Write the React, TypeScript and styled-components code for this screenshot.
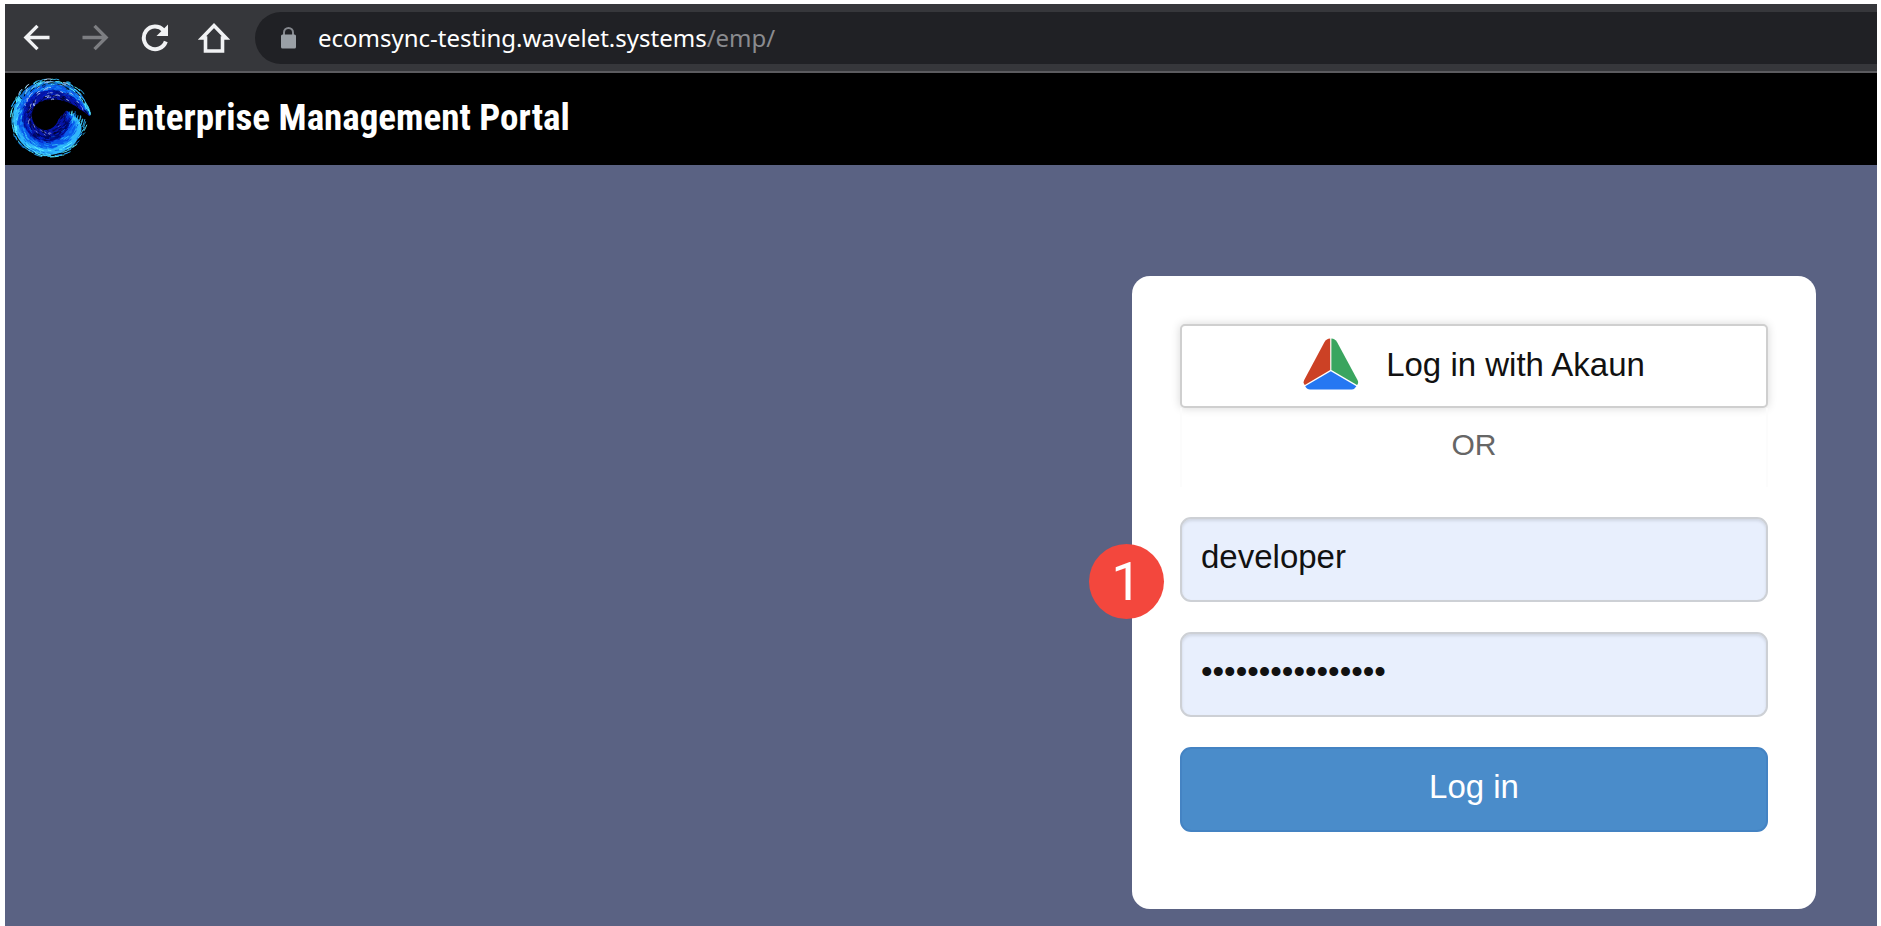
import React from "react";
import styled, { createGlobalStyle } from "styled-components";

const GlobalStyle = createGlobalStyle`
  *, *::before, *::after { box-sizing: border-box; }
  html, body, #root { height: 100%; }
  body {
    margin: 0;
    background: #fff;
    font-family: "Liberation Sans", Arial, sans-serif;
  }
`;

const Page = styled.div`
  display: flex;
  flex-direction: column;
  min-height: 100%;
  padding: 4px 4px 0 5px;
`;

const BrowserBar = styled.nav`
  display: flex;
  align-items: center;
  height: 69px;
  padding-left: 14px;
  background: #36373b;
  border-bottom: 2px solid #5b5b5f;
`;

const NavButton = styled.button<{ $dim?: boolean }>`
  display: flex;
  align-items: center;
  justify-content: center;
  width: 59px;
  height: 40px;
  padding: 0 24px 0 0;
  border: 0;
  background: none;
  color: ${(p) => (p.$dim ? "#7d7e82" : "#f1f2f4")};
  svg { flex: none; }
`;

const AddressBar = styled.div`
  display: flex;
  align-items: center;
  flex: 1;
  gap: 21px;
  height: 52px;
  padding-left: 25px;
  border-radius: 26px 0 0 26px;
  background: #202125;
  color: #8a8b8f;
  font: 24px/32px "Noto Sans", "Open Sans", sans-serif;
`;

const Url = styled.span`
  white-space: nowrap;
`;

const Host = styled.span`
  color: #fff;
`;

const PortalHeader = styled.header`
  display: flex;
  align-items: center;
  gap: 21px;
  height: 92px;
  background: #000;
`;

const PortalTitle = styled.h1`
  margin: 0;
  padding-bottom: 2px;
  color: #fff;
  font: bold 37px/44px "Roboto Condensed", "Liberation Sans Narrow", "Arial Narrow", sans-serif;
  white-space: nowrap;
`;

const Main = styled.main`
  display: flex;
  flex: 1;
  align-items: flex-start;
  justify-content: flex-end;
  padding: 111px 61px 17px;
  background: #5a6283;
`;

const LoginCard = styled.form`
  position: relative;
  display: flex;
  flex-direction: column;
  gap: 30px;
  width: 100%;
  max-width: 684px;
  padding: 48px 48px 77px;
  border-radius: 18px;
  background: #fff;
`;

const AkaunButton = styled.button`
  display: flex;
  align-items: center;
  justify-content: center;
  gap: 27px;
  width: 100%;
  height: 84px;
  padding: 0 0 2px;
  border: 2px solid #cfcfcf;
  border-radius: 5px;
  background: #fff;
  box-shadow: 0 0 10px rgba(0, 0, 0, 0.16);
  color: #111;
  font: 33px/40px "Liberation Sans", Arial, sans-serif;
`;

const Divider = styled.div`
  height: 79px;
  padding-top: 17px;
  border: solid #fcfcfc;
  border-width: 0 2px;
  color: #666;
  font-size: 30px;
  line-height: 40px;
  text-align: center;
`;

const Field = styled.input`
  display: block;
  width: 100%;
  height: 85px;
  padding: 0 19px 6px;
  border: 2px solid #cdd0d5;
  border-radius: 11px;
  outline: none;
  background: #e8effd;
  box-shadow: inset 0 2px 3px rgba(0, 0, 0, 0.1);
  color: #111;
  font: 33px/40px "Liberation Sans", Arial, sans-serif;
`;

const SubmitButton = styled.button`
  width: 100%;
  height: 85px;
  padding: 0 0 5px;
  border: 2px solid #4483c3;
  border-radius: 11px;
  background: #4a8cca;
  color: #fff;
  font: 33px/40px "Liberation Sans", Arial, sans-serif;
`;

const StepBadge = styled.span`
  position: absolute;
  top: 268px;
  left: -43px;
  display: flex;
  align-items: center;
  justify-content: center;
  width: 75px;
  height: 75px;
  border-radius: 50%;
  background: #f3473d;
  color: #fff;
  font: 54px/60px Roboto, sans-serif;
`;

/* Outline of the wave emblem: [angle in degrees, inner radius, outer radius] */
const WAVE = [
  [0, 43, 45], [12, 34, 42], [28, 27, 43], [45, 22, 41], [65, 18, 38],
  [90, 16, 36], [135, 15, 35], [180, 14, 33], [225, 14, 37], [270, 14, 40],
  [315, 13, 41], [340, 13, 39], [352, 14, 34], [364, 17, 27], [374, 20, 22],
];

const bounds = (angle: number) => {
  const i = Math.max(1, WAVE.findIndex((w) => w[0] >= angle));
  const [a, b] = [WAVE[i - 1], WAVE[i]];
  const t = (angle - a[0]) / (b[0] - a[0]);
  return [a[1] + (b[1] - a[1]) * t, a[2] + (b[2] - a[2]) * t];
};

const point = (angle: number, radius: number) => {
  const r = (angle * Math.PI) / 180;
  return `${(41 + radius * Math.cos(r)).toFixed(1)} ${(43 - radius * Math.sin(r)).toFixed(1)}`;
};

const band = (from: number, to: number, start = 0, end = 374) => {
  const outer: string[] = [];
  const inner: string[] = [];
  for (let a = start; a <= end; a += 2) {
    const [lo, hi] = bounds(a);
    outer.push(point(a, lo + (hi - lo) * to));
    inner.unshift(point(a, lo + (hi - lo) * from));
  }
  return `M${[...outer, ...inner].join("L")}Z`;
};

const sprayStrokes = () => {
  let seed = 7;
  const rand = () => {
    seed = (seed * 16807) % 2147483647;
    return seed / 2147483647;
  };
  return Array.from({ length: 760 }, () => {
    const a = 2 + rand() * 364;
    const depth = rand() * 1.08;
    const [lo, hi] = bounds(a);
    const r = lo + (hi - lo) * depth;
    const upper = a < 150;
    const length = 3 + rand() * 8;
    const pick = rand();
    let color = "#0710a0";
    if (depth > 0.76) color = pick < 0.45 ? "#5cf0ff" : pick < 0.85 ? "#30bcff" : "#0a70e0";
    else if (depth > 0.5) color = pick < 0.45 ? "#1a90f8" : pick < 0.75 ? "#0a50e8" : "#3ac8fa";
    else if (depth > 0.25) color = pick < 0.5 ? "#001088" : pick < 0.9 ? "#0322cc" : "#0858ef";
    else color = pick < 0.55 ? "#020438" : pick < 0.88 ? "#0714a8" : "#8d96c8";
    if (upper && pick > 0.86) color = "#b4cdec";
    if (upper && depth > 0.7 && pick < 0.18) color = "#000";
    const e = Math.min(372, a + length);
    return { d: `M${point(a, r)}Q${point((a + e) / 2, r + 0.4)} ${point(e, r - (upper ? 1.2 : -0.8))}`, color };
  });
};

const strokes = sprayStrokes();

const WaveLogo = () => (
  <svg width="92" height="92" viewBox="0 0 92 92" role="img" aria-label="Wavelet">
    <path d={band(0, 0.55)} fill="#0514a8" />
    <path d={band(0.45, 0.75)} fill="#0a5cec" />
    <path d={band(0.72, 0.96, 145, 366)} fill="#2fb4fa" />
    <path d={band(0.72, 0.92, 6, 145)} fill="#0f6cd0" />
    <path d={band(0.24, 0.42, 235, 345)} fill="#000660" />
    <g fill="none" strokeWidth="0.9" strokeLinecap="round">
      {strokes.map((s, i) => (
        <path key={i} d={s.d} stroke={s.color} />
      ))}
    </g>
  </svg>
);

const BackIcon = () => (
  <svg width="27" height="27" viewBox="0 0 28 28" fill="none" stroke="currentColor" strokeWidth="3.500" aria-hidden="true">
    <path d="M27.500 14H3.500M15 2L3 14l12 12" />
  </svg>
);

const ForwardIcon = () => (
  <svg width="27" height="27" viewBox="0 0 28 28" fill="none" stroke="currentColor" strokeWidth="3.500" aria-hidden="true">
    <path d="M.5 14h24M13 2l12 12-12 12" />
  </svg>
);

const ReloadIcon = () => (
  <svg width="28" height="28" viewBox="0 0 28 28" aria-hidden="true">
    <path d="M24.800 17.500A11.300 11.300 0 1 1 22.500 6.300" fill="none" stroke="currentColor" strokeWidth="4" />
    <path d="M27 .5V12H15.500Z" fill="currentColor" />
  </svg>
);

const HomeIcon = () => (
  <svg width="32" height="32" viewBox="0 0 32 32" aria-hidden="true">
    <path d="M4 16L16 3.500L28 16H24.500V29H7.500V16Z" fill="none" stroke="currentColor" strokeWidth="3.600" />
  </svg>
);

const LockIcon = () => (
  <svg width="17" height="22" viewBox="0 0 17 22" aria-hidden="true">
    <path d="M4 9V5.500a4.500 4.500 0 0 1 9 0V9" fill="none" stroke="#85888e" strokeWidth="2" />
    <rect x="1" y="7.500" width="15" height="14" rx="1.500" fill="#9aa0a6" />
  </svg>
);

const AkaunLogo = () => (
  <svg width="56" height="56" viewBox="0 0 56 56" aria-hidden="true">
    <path d="M27.200 1.500V33L1.800 48Q-.2 46 1.200 43L21.500 5Q23.500 1.500 27.200 1.500Z" fill="#cc4125" />
    <path d="M28.400 1.500V33L54 48Q56 46 54.500 43L34 5Q32 1.500 28.400 1.500Z" fill="#3aa55f" />
    <path d="M27.800 34.200L53.400 49.300Q51.500 52.500 49 52.500H7Q4 52.500 2.200 49.300Z" fill="#2577f2" />
  </svg>
);

export default function App() {
  return (
    <>
      <GlobalStyle />
      <Page>
        <BrowserBar aria-label="Browser">
          <NavButton aria-label="Back"><BackIcon /></NavButton>
          <NavButton aria-label="Forward" $dim><ForwardIcon /></NavButton>
          <NavButton aria-label="Reload"><ReloadIcon /></NavButton>
          <NavButton aria-label="Home"><HomeIcon /></NavButton>
          <AddressBar>
            <LockIcon />
            <Url><Host>ecomsync-testing.wavelet.systems</Host>/emp/</Url>
          </AddressBar>
        </BrowserBar>
        <PortalHeader>
          <WaveLogo />
          <PortalTitle>Enterprise Management Portal</PortalTitle>
        </PortalHeader>
        <Main>
          <LoginCard onSubmit={(e) => e.preventDefault()}>
            <div>
              <AkaunButton type="button">
                <AkaunLogo />
                Log in with Akaun
              </AkaunButton>
              <Divider>OR</Divider>
            </div>
            <Field aria-label="Username" type="text" defaultValue="developer" />
            <Field aria-label="Password" type="password" defaultValue="abcdefgh12345678" />
            <SubmitButton type="submit">Log in</SubmitButton>
            <StepBadge>1</StepBadge>
          </LoginCard>
        </Main>
      </Page>
    </>
  );
}
